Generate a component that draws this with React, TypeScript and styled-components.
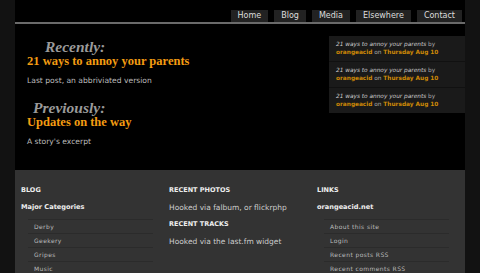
import React from 'react';
import styled, { createGlobalStyle } from 'styled-components';

const GlobalStyle = createGlobalStyle`
  html, body {
    margin: 0;
    padding: 0;
    background: #121212;
    font-family: "DejaVu Sans", Verdana, sans-serif;
  }
`;

const Page = styled.div`
  width: 450px;
  margin: 0 auto;
  background: #000;
`;

const Header = styled.div`
  display: flex;
  justify-content: flex-end;
  padding: 10px 3px 0 0;
  border-bottom: 2px solid #6a6a6a;
`;

const Tab = styled.a`
  display: block;
  height: 12px;
  line-height: 12px;
  margin-left: 6px;
  padding: 0 7px;
  background: #222;
  color: #ddd;
  font-size: 8px;
  text-decoration: none;
`;

const Body = styled.div`
  display: flex;
  height: 146px;
`;

const Main = styled.div`
  flex: 1;
  padding: 14px 0 0 12px;
`;

const Kicker = styled.div<{ $indent: number }>`
  padding-left: ${p => p.$indent}px;
  font-family: "Liberation Serif", Georgia, serif;
  font-style: italic;
  font-weight: bold;
  font-size: 15.5px;
  line-height: 17px;
  color: #9a9a9a;
`;

const Title = styled.div`
  font-family: "Liberation Serif", Georgia, serif;
  font-weight: bold;
  font-size: 12.5px;
  line-height: 13px;
  color: #f39c12;
`;

const Excerpt = styled.p`
  margin: 8px 0 13px;
  font-size: 7.6px;
  line-height: 10px;
  color: #bbb;
`;

const Sidebar = styled.div`
  width: 136px;
  margin-top: 12px;
  align-self: flex-start;
  background: #1a1a1a;
`;

const Recent = styled.div`
  padding: 5px 7px 5px;
  font-size: 5.8px;
  line-height: 7.5px;
  color: #aaa;
  & + & {
    border-top: 1px solid #111;
  }
`;

const PostName = styled.span`
  font-style: italic;
  color: #ccc;
`;

const Orange = styled.span`
  color: #cf8a06;
  font-weight: bold;
`;

const Footer = styled.div`
  display: flex;
  height: 103px;
  padding: 16px 0 0 6px;
  box-sizing: border-box;
  background: #333;
  overflow: hidden;
`;

const Col = styled.div`
  width: 148px;
`;

const ColHead = styled.div`
  font-size: 6.5px;
  font-weight: bold;
  color: #eee;
  line-height: 8px;
  margin-bottom: 9px;
`;

const SubHead = styled.div`
  font-size: 6.6px;
  font-weight: bold;
  color: #eee;
  line-height: 9px;
  margin-bottom: 7px;
`;

const Note = styled.div`
  font-size: 7.5px;
  color: #ccc;
  line-height: 10px;
  margin-bottom: 7px;
`;

const List = styled.ul`
  list-style: none;
  margin: 0 0 0 7px;
  padding: 0;
  width: 125px;
`;

const Item = styled.li`
  height: 13px;
  line-height: 14px;
  padding-left: 6px;
  border-top: 1px solid #2b2b2b;
  font-size: 6px;
  letter-spacing: 0.4px;
  color: #bbb;
`;

const tabs = ['Home', 'Blog', 'Media', 'Elsewhere', 'Contact'];

export default function App() {
  return (
    <Page>
      <GlobalStyle />
      <Header>
        {tabs.map(t => <Tab key={t}>{t}</Tab>)}
      </Header>
      <Body>
        <Main>
          <Kicker $indent={18}>Recently:</Kicker>
          <Title>21 ways to annoy your parents</Title>
          <Excerpt>Last post, an abbriviated version</Excerpt>
          <Kicker $indent={6}>Previously:</Kicker>
          <Title>Updates on the way</Title>
          <Excerpt>A story's excerpt</Excerpt>
        </Main>
        <Sidebar>
          {[0, 1, 2].map(i => (
            <Recent key={i}>
              <PostName>21 ways to annoy your parents</PostName> by<br />
              <Orange>orangeacid</Orange> on <Orange>Thursday Aug 10</Orange>
            </Recent>
          ))}
        </Sidebar>
      </Body>
      <Footer>
        <Col>
          <ColHead>BLOG</ColHead>
          <SubHead>Major Categories</SubHead>
          <List>
            {['Derby', 'Geekery', 'Gripes', 'Music'].map(t => <Item key={t}>{t}</Item>)}
          </List>
        </Col>
        <Col>
          <ColHead>RECENT PHOTOS</ColHead>
          <Note>Hooked via falbum, or flickrphp</Note>
          <ColHead>RECENT TRACKS</ColHead>
          <Note>Hooked via the last.fm widget</Note>
        </Col>
        <Col>
          <ColHead>LINKS</ColHead>
          <SubHead>orangeacid.net</SubHead>
          <List>
            {['About this site', 'Login', 'Recent posts RSS', 'Recent comments RSS'].map(t => <Item key={t}>{t}</Item>)}
          </List>
        </Col>
      </Footer>
    </Page>
  );
}
